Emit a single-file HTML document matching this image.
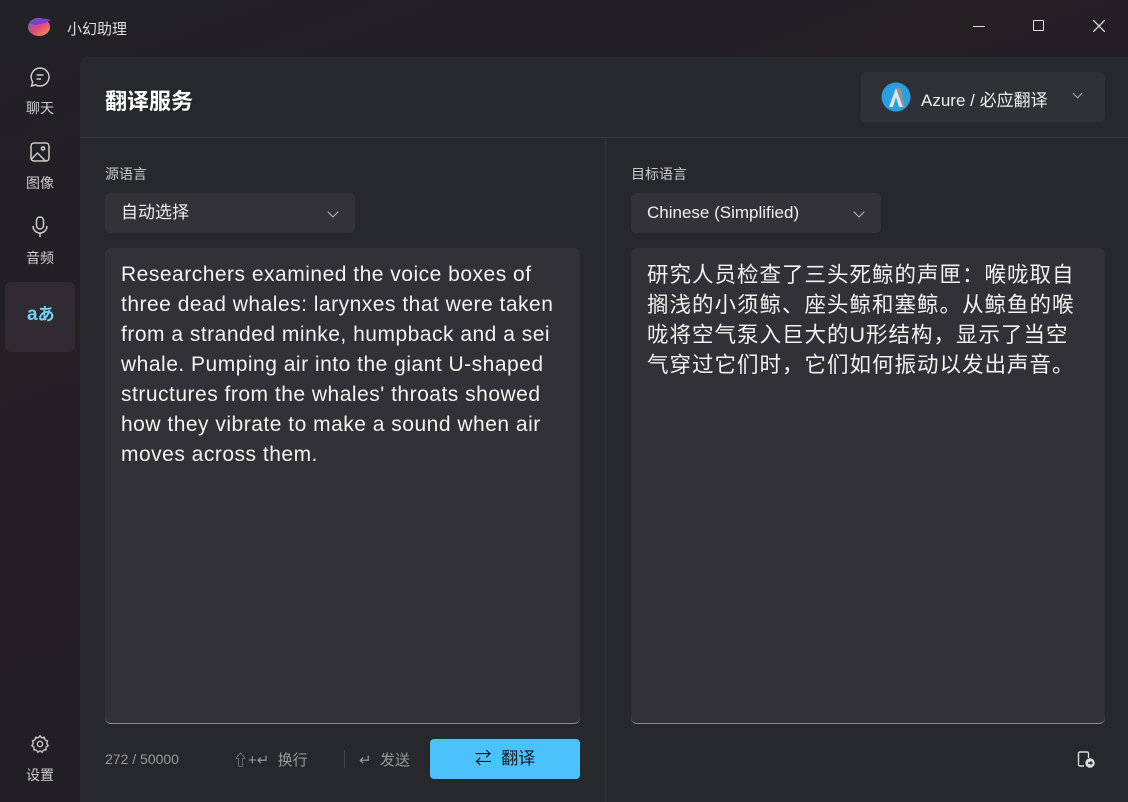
<!DOCTYPE html>
<html><head><meta charset="utf-8"><style>
*{margin:0;padding:0;box-sizing:border-box}
body{width:1128px;height:802px;overflow:hidden;background:linear-gradient(160deg,#222126 0%,#241f24 40%,#1f1f23 100%);font-family:"Liberation Sans","Noto Sans CJK SC",sans-serif;color:#e8e8e8;position:relative}
.abs{position:absolute}
.main{left:80px;top:57px;width:1048px;height:745px;background:#27282c;border-top-left-radius:8px}
.nav{left:5px;width:70px;text-align:center;font-size:14px;color:#ccc}
.dd{background:#333337;border-radius:5px;height:40px;font-size:17px;color:#eee;padding:0 16px;line-height:40px}
.ta{background:#323236;border-radius:6px;border-bottom:1px solid #8a8a8e;font-size:21px;line-height:30px;padding:12px 16px;color:#f2f2f2}
.chev{position:absolute;right:18px;top:15px;width:8px;height:8px;border-right:1.5px solid #bbb;border-bottom:1.5px solid #bbb;transform:rotate(45deg)}
</style></head><body>
<svg class="abs" style="left:27px;top:14px" width="26" height="24" viewBox="0 0 26 24"><defs><linearGradient id="g" x1="0" y1="0" x2="1" y2="1"><stop offset="0" stop-color="#3a7bd5"/><stop offset=".5" stop-color="#e8457a"/><stop offset="1" stop-color="#f6a04a"/></linearGradient></defs><ellipse cx="12" cy="13" rx="11" ry="9" fill="url(#g)"/><path d="M2 9 Q12 2 24 6 Q18 10 8 11Z" fill="#7a3fd0"/></svg>
<div class="abs" style="left:67px;top:18px;font-size:15px;color:#ddd">小幻助理</div>
<div class="abs" style="left:973px;top:26px;width:12px;height:1px;background:#ddd"></div>
<div class="abs" style="left:1033px;top:20px;width:11px;height:11px;border:1.3px solid #ddd;border-radius:1px"></div>
<svg class="abs" style="left:1093px;top:20px" width="12" height="12"><path d="M0 0L12 12M12 0L0 12" stroke="#ddd" stroke-width="1.3"/></svg>

<svg class="abs" style="left:29px;top:66px" width="22" height="22" viewBox="0 0 22 22" fill="none" stroke="#ccc" stroke-width="1.5"><path d="M11 2a9 9 0 1 1-4.5 16.8L2.5 20l1.2-4A9 9 0 0 1 11 2z"/><path d="M7.5 9h7M7.5 13h4.5"/></svg>
<div class="abs nav" style="top:98px">聊天</div>
<svg class="abs" style="left:30px;top:142px" width="20" height="20" viewBox="0 0 20 20" fill="none" stroke="#ccc" stroke-width="1.5"><rect x="1" y="1" width="18" height="18" rx="3"/><circle cx="13" cy="6.5" r="1.6"/><path d="M1.5 17l6-6 8 8"/></svg>
<div class="abs nav" style="top:173px">图像</div>
<svg class="abs" style="left:31px;top:216px" width="18" height="22" viewBox="0 0 18 22" fill="none" stroke="#ccc" stroke-width="1.5"><rect x="5.5" y="1" width="7" height="12" rx="3.5"/><path d="M2 10a7 7 0 0 0 14 0M9 17v4"/></svg>
<div class="abs nav" style="top:248px">音频</div>
<div class="abs" style="left:5px;top:282px;width:70px;height:70px;background:#2f2b31;border-radius:6px"></div>
<div class="abs" style="left:27px;top:300px;color:#6ed3f5;font-size:19px;font-weight:bold">a<span style="font-size:17px">あ</span></div>
<svg class="abs" style="left:30px;top:734px" width="20" height="20" viewBox="0 0 24 24" fill="none" stroke="#ccc" stroke-width="1.6"><circle cx="12" cy="12" r="3.2"/><path d="M12 2l2 2.5 3.2-.6.8 3.1 3 1.3-1 3 1.8 2.7-2.6 1.8.1 3.2-3.2.3L14.5 22 12 20l-2.5 2-1.6-2.7-3.2-.3.1-3.2L2.2 14l1.8-2.7-1-3 3-1.3.8-3.1 3.2.6z"/></svg>
<div class="abs nav" style="top:765px">设置</div>

<div class="abs main"></div>
<div class="abs" style="left:105px;top:84px;font-size:22px;font-weight:bold;color:#fff">翻译服务</div>
<div class="abs" style="left:861px;top:72px;width:244px;height:50px;background:#303135;border-radius:5px"></div>
<svg class="abs" style="left:881px;top:82px" width="30" height="30" viewBox="0 0 30 30"><circle cx="15" cy="15" r="14.5" fill="#2a9fe0"/><path d="M8 25 L15 6 L22 25 L18 25 L15 15 L12 25Z" fill="#dfe4ea"/><path d="M15 6 L20 6 L24 25 L22 25Z" fill="#8a939d"/></svg>
<div class="abs" style="left:921px;top:86px;font-size:17px;color:#eee">Azure / 必应翻译</div>
<div class="abs" style="left:1074px;top:90px;width:7px;height:7px;border-right:1.5px solid #aaa;border-bottom:1.5px solid #aaa;transform:rotate(45deg)"></div>
<div class="abs" style="left:80px;top:137px;width:1048px;height:1px;background:#3a3a3e"></div>
<div class="abs" style="left:605px;top:138px;width:1px;height:664px;background:#36363a"></div>

<div class="abs" style="left:105px;top:164px;font-size:14px;color:#ccc">源语言</div>
<div class="abs dd" style="left:105px;top:193px;width:250px">自动选择<div class="chev"></div></div>
<div class="abs ta" style="left:105px;top:248px;width:475px;height:476px;letter-spacing:0.5px;padding-right:14px">Researchers examined the voice boxes of three dead whales: larynxes that were taken from a stranded minke, humpback and a sei whale. Pumping air into the giant U-shaped structures from the whales' throats showed how they vibrate to make a sound when air moves across them.</div>

<div class="abs" style="left:631px;top:164px;font-size:14px;color:#ccc">目标语言</div>
<div class="abs dd" style="left:631px;top:193px;width:250px">Chinese (Simplified)<div class="chev"></div></div>
<div class="abs ta" style="left:631px;top:248px;width:474px;height:476px;font-size:21.5px;letter-spacing:1px">研究人员检查了三头死鲸的声匣：喉咙取自搁浅的小须鲸、座头鲸和塞鲸。从鲸鱼的喉咙将空气泵入巨大的U形结构，显示了当空气穿过它们时，它们如何振动以发出声音。</div>

<div class="abs" style="left:105px;top:751px;font-size:14px;color:#999">272 / 50000</div>
<div class="abs" style="left:233px;top:749px;font-size:15px;color:#999">⇧+↵&nbsp; 换行</div>
<div class="abs" style="left:344px;top:750px;width:1px;height:18px;background:#444"></div>
<div class="abs" style="left:359px;top:749px;font-size:15px;color:#999">↵&nbsp; 发送</div>
<div class="abs" style="left:430px;top:739px;width:150px;height:40px;background:#4cc2fc;border-radius:4px;color:#1a1a1a;font-size:17px;text-align:center;line-height:40px">⇄&nbsp; 翻译</div>
<svg class="abs" style="left:1076px;top:749px" width="20" height="20" viewBox="0 0 20 20" fill="none" stroke="#ddd" stroke-width="1.4"><path d="M8 17H4a1.5 1.5 0 0 1-1.5-1.5v-11A1.5 1.5 0 0 1 4 3h7a1.5 1.5 0 0 1 1.5 1.5V9"/><circle cx="14" cy="14" r="4" fill="#ddd"/><path d="M12 14h4M14.5 12.5L16 14l-1.5 1.5" stroke="#27282c"/></svg>
</body></html>
